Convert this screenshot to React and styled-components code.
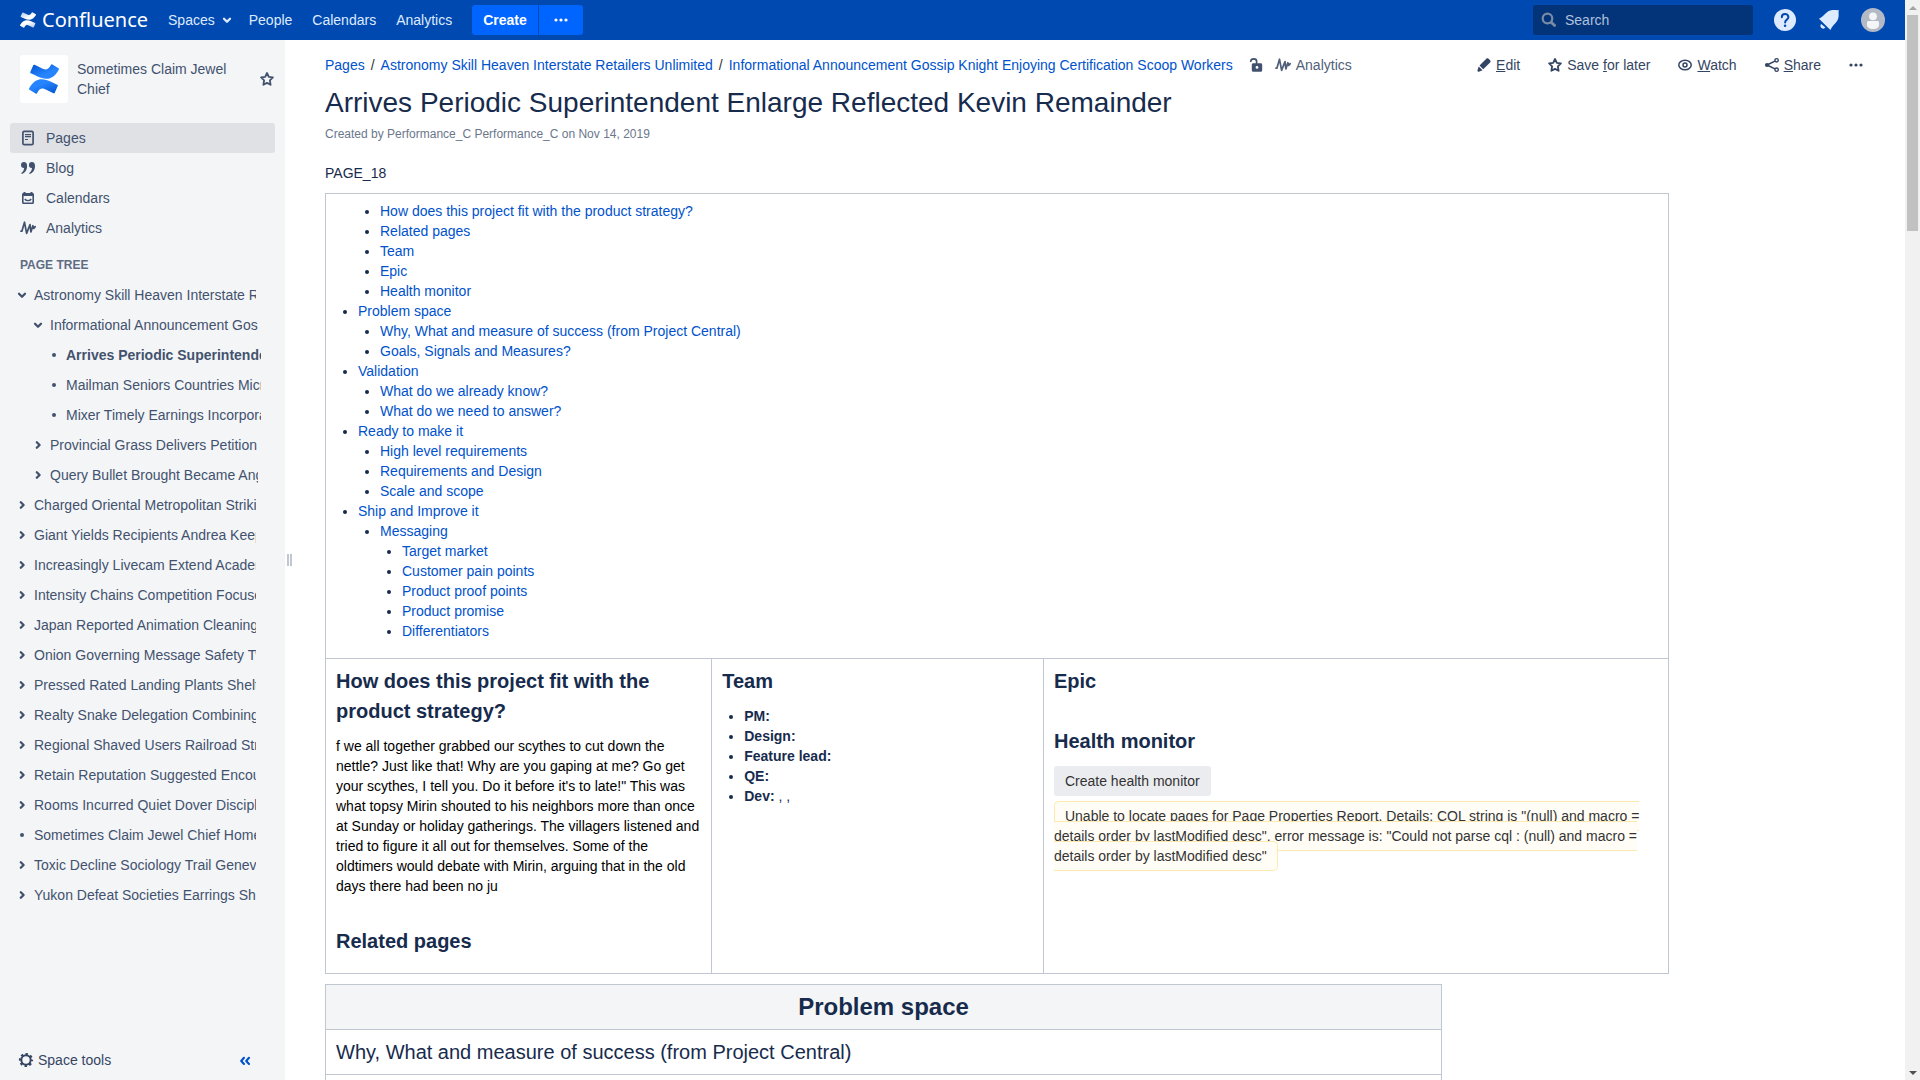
import React from 'react';
import styled, { createGlobalStyle, css } from 'styled-components';

const GlobalStyle = createGlobalStyle`
  *, *::before, *::after { box-sizing: border-box; }
  html, body, #root { height: 100%; }
  body {
    margin: 0;
    overflow: hidden;
    background: #fff;
    color: #172b4d;
    font: 14px/20px "Liberation Sans", Arial, sans-serif;
  }
  a { color: #0052cc; text-decoration: none; }
  button, input { font: inherit; }
  svg { display: block; flex: none; }
  h1, h2, p, ul { margin: 0; padding: 0; }
`;

/* ---------- icons ---------- */

const Icon = ({ size = 16, children, ...rest }) => (
  <svg width={size} height={size} viewBox="0 0 16 16" fill="none" aria-hidden="true" {...rest}>
    {children}
  </svg>
);

const MARK_BOTTOM =
  'M.87 18.257c-.248.382-.53.875-.763 1.245a.764.764 0 0 0 .255 1.04l4.965 3.054a.764.764 0 0 0 1.058-.26c.199-.332.454-.763.733-1.221 1.967-3.247 3.945-2.853 7.508-1.146l4.957 2.337a.764.764 0 0 0 1.028-.382l2.364-5.346a.764.764 0 0 0-.382-1 599.851 599.851 0 0 1-4.965-2.361C10.911 10.97 5.224 11.185.87 18.257z';
const MARK_TOP =
  'M23.131 5.743c.249-.405.531-.875.764-1.25a.764.764 0 0 0-.256-1.034L18.675.404a.764.764 0 0 0-1.058.26c-.195.335-.451.763-.734 1.225-1.966 3.246-3.945 2.85-7.508 1.146L4.437.694a.764.764 0 0 0-1.027.382L1.046 6.422a.764.764 0 0 0 .382 1c1.039.49 3.105 1.467 4.965 2.361 6.698 3.246 12.392 3.029 16.738-4.04z';

const Mark = ({ id, size, dark, light }) => (
  <svg width={size} height={size} viewBox="0 0 24 24" aria-hidden="true">
    <defs>
      <linearGradient id={`${id}b`} x1="1" y1="1" x2="0.3" y2="0.2">
        <stop offset="0" stopColor={dark} />
        <stop offset="0.8" stopColor={light} />
      </linearGradient>
      <linearGradient id={`${id}t`} x1="0" y1="0" x2="0.7" y2="0.8">
        <stop offset="0" stopColor={dark} />
        <stop offset="0.8" stopColor={light} />
      </linearGradient>
    </defs>
    <path d={MARK_BOTTOM} fill={`url(#${id}b)`} />
    <path d={MARK_TOP} fill={`url(#${id}t)`} />
  </svg>
);

const ChevronDown = () => (
  <Icon><path d="M5 6.800 8 9.800l3-3" stroke="currentColor" strokeWidth="2.300" strokeLinecap="round" strokeLinejoin="round" /></Icon>
);
const ChevronRight = () => (
  <Icon><path d="M6.800 5.200 9.600 8l-2.800 2.800" stroke="currentColor" strokeWidth="2.300" strokeLinecap="round" strokeLinejoin="round" /></Icon>
);
const Dot = () => (
  <Icon><circle cx="8" cy="8" r="2" fill="currentColor" /></Icon>
);
const Dots = () => (
  <Icon>
    <circle cx="3" cy="8" r="1.6" fill="currentColor" />
    <circle cx="8" cy="8" r="1.6" fill="currentColor" />
    <circle cx="13" cy="8" r="1.6" fill="currentColor" />
  </Icon>
);
const StarIcon = () => (
  <Icon>
    <path d="M8 2l1.800 3.900 4.100.5-3 2.900.7 4.500L8 11.900l-3.600 1.900.7-4.500-3-2.900 4.100-.5z" stroke="currentColor" strokeWidth="1.800" strokeLinejoin="round" />
  </Icon>
);
const PagesIcon = () => (
  <Icon>
    <rect x="2.9" y="1.4" width="10.2" height="13.2" rx="1.4" stroke="currentColor" strokeWidth="1.7" />
    <path d="M5 4.6h6M5 6.6h6M5 9.5h3" stroke="currentColor" strokeWidth="1.2" />
  </Icon>
);
const BlogIcon = () => (
  <Icon>
    <path d="M1 5a3 3 0 0 1 3-3c2 0 3.1 1.600 3.100 4 0 4-2 7-5.400 8l-.5-1c1.700-.9 2.700-2.500 2.900-5A3 3 0 0 1 1 5z" fill="currentColor" />
    <path d="M8.900 5a3 3 0 0 1 3-3c2 0 3.100 1.600 3.100 4 0 4-2 7-5.400 8l-.5-1c1.700-.9 2.700-2.500 2.900-5A3 3 0 0 1 8.900 5z" fill="currentColor" />
  </Icon>
);
const CalendarIcon = () => (
  <Icon>
    <rect x="2.800" y="3.800" width="10.400" height="9.400" rx="0.800" stroke="currentColor" strokeWidth="1.600" />
    <path d="M2.500 3.500h11V6h-11zM3.500 2h2v2h-2zM10.500 2h2v2h-2z" fill="currentColor" />
    <path d="M4.800 9c1.400 2.100 5 2.100 6.400 0" stroke="currentColor" strokeWidth="1.400" />
  </Icon>
);
const AnalyticsIcon = () => (
  <Icon>
    <path d="M1 11.200h.9L4.500 2.200 6.600 13.400 10 4.600l.9 7.400 2-6.300.8 2.800 1.500-1.900" stroke="currentColor" strokeWidth="1.700" strokeLinecap="round" strokeLinejoin="round" />
  </Icon>
);
const GearIcon = () => (
  <Icon>
    <circle cx="8" cy="8" r="4.700" stroke="currentColor" strokeWidth="2" />
    <circle cx="8" cy="8" r="6.100" stroke="currentColor" strokeWidth="2" strokeDasharray="2.400 2.391" strokeDashoffset="1.200" />
  </Icon>
);
const CollapseIcon = () => (
  <Icon>
    <path d="M7 5.800 4.200 9l2.800 3M12 5.800 9.200 9l2.800 3" stroke="currentColor" strokeWidth="2.100" strokeLinecap="round" strokeLinejoin="round" />
  </Icon>
);
const UnlockIcon = () => (
  <Icon>
    <path d="M2.800 4.300c.2-3.200 5.800-3.200 5.800 0V7" stroke="currentColor" strokeWidth="1.700" strokeLinecap="round" />
    <path fillRule="evenodd" d="M5.300 6.300h7.400c.9 0 1.500.6 1.500 1.500v5.400c0 .9-.6 1.500-1.500 1.500H5.300c-.9 0-1.500-.6-1.500-1.500V7.800c0-.9.600-1.500 1.500-1.500zM9 9a1.400 1.400 0 1 0 0 2.800A1.400 1.400 0 0 0 9 9z" fill="currentColor" />
  </Icon>
);
const PencilIcon = () => (
  <Icon>
    <path d="M10.300 1.700c.6-.6 1.700-.6 2.300 0l1.500 1.500c.6.600.6 1.600 0 2.200L7.200 12.300 3.500 8.600zM2.700 9.500l3.800 3.700-3.600 1.500c-1 .3-1.700-.4-1.400-1.400z" fill="currentColor" />
  </Icon>
);
const EyeIcon = () => (
  <Icon>
    <ellipse cx="8" cy="8" rx="6.200" ry="4.800" stroke="currentColor" strokeWidth="1.500" />
    <circle cx="8" cy="8" r="2" stroke="currentColor" strokeWidth="1.500" />
  </Icon>
);
const ShareIcon = () => (
  <Icon>
    <path d="M3 8l9.500-4.700M3 8l9.500 4.700" stroke="currentColor" strokeWidth="1.500" />
    <circle cx="3" cy="8" r="2.100" fill="currentColor" />
    <circle cx="12.600" cy="3.300" r="1.700" fill="#fff" stroke="currentColor" strokeWidth="1.400" />
    <circle cx="12.600" cy="12.700" r="1.700" fill="#fff" stroke="currentColor" strokeWidth="1.400" />
  </Icon>
);
const SearchIcon = () => (
  <Icon>
    <circle cx="6.500" cy="6.500" r="4.800" stroke="currentColor" strokeWidth="2.200" />
    <path d="M10.400 10.400 13.600 13.600" stroke="currentColor" strokeWidth="2.800" strokeLinecap="round" />
  </Icon>
);
const HelpIcon = () => (
  <svg width="24" height="24" viewBox="0 0 24 24" fill="none" aria-hidden="true">
    <circle cx="12" cy="12" r="11" fill="#deebff" />
    <path d="M8.800 9.200c0-4.300 6.600-4.300 6.600 0 0 2.400-3.300 2.500-3.300 5.300" stroke="#0049b0" strokeWidth="2" strokeLinecap="round" />
    <circle cx="12.100" cy="17.800" r="1.300" fill="#0049b0" />
  </svg>
);
const BellIcon = () => (
  <svg width="24" height="24" viewBox="0 0 24 24" fill="#deebff" aria-hidden="true">
    <path d="M2 10.800C5.800 9.300 7.300 5.900 10.900 3.600c2.900-1.800 6.400-1.700 9.300-1.400l1.100-.3.600.7-.4 1.200c.3 3 .4 6.300-1.400 9.200-2.200 3.500-5.300 5-6.700 9z" />
    <path d="M4.200 16 8.400 19.600a2.300 2.300 0 1 1-4.200-3.600z" />
  </svg>
);
const AvatarIcon = () => (
  <svg width="24" height="24" viewBox="0 0 24 24" aria-hidden="true">
    <circle cx="12" cy="12" r="12" fill="#b3bac5" />
    <circle cx="12" cy="8.300" r="3.900" fill="#f4f5f7" />
    <path d="M6 14.500c0-.9.600-1.500 1.500-1.500h9c.9 0 1.500.6 1.500 1.500V17c0 2.500-2.500 4-6 4s-6-1.500-6-4z" fill="#f4f5f7" />
  </svg>
);

/* ---------- frame ---------- */

const Frame = styled.div`
  display: flex;
  height: 100vh;
`;
const Site = styled.div`
  display: flex;
  flex: 1;
  flex-direction: column;
  min-width: 0;
`;
const ScrollTrack = styled.div`
  display: flex;
  flex-direction: column;
  width: 15px;
  background: #f1f1f1;
`;
const ScrollArrow = styled.div`
  display: flex;
  justify-content: center;
  align-items: center;
  height: 15px;
`;
const ScrollThumb = styled.div`
  height: 20%;
  margin: 0 2px auto;
  background: #c1c1c1;
`;

/* ---------- header ---------- */

const Header = styled.header`
  display: flex;
  flex: none;
  align-items: center;
  justify-content: space-between;
  height: 40px;
  padding: 0 20px;
  background: #0049b0;
  color: #deebff;
`;
const HeaderSide = styled.div`
  display: flex;
  align-items: center;
`;
const Logo = styled.a`
  display: flex;
  align-items: center;
  gap: 6px;
  margin-right: 20px;
  color: #fff;
  font: 20px/28px "Noto Sans", "Open Sans", sans-serif;
`;
const NavLink = styled.a`
  display: flex;
  align-items: center;
  gap: 4px;
  margin-right: ${(p) => (p.$menu ? '14px' : '20px')};
  color: #deebff;
`;
const CreateGroup = styled.div`
  display: flex;
  gap: 1px;
`;
const CreateButton = styled.button`
  display: flex;
  align-items: center;
  justify-content: center;
  height: 30px;
  padding: 0 ${(p) => (p.$more ? '14px' : '11px')};
  border: 0;
  border-radius: ${(p) => (p.$more ? '0 3px 3px 0' : '3px 0 0 3px')};
  background: #0065ff;
  color: #fff;
  font-weight: bold;
`;
const SearchBox = styled.label`
  display: flex;
  align-items: center;
  gap: 8px;
  width: 220px;
  height: 30px;
  margin-right: 20px;
  padding: 0 8px;
  border-radius: 3px;
  background: #03347a;
  color: #7c8ba5;
`;
const SearchInput = styled.input`
  flex: 1;
  min-width: 0;
  padding: 0;
  border: 0;
  outline: 0;
  background: transparent;
  color: #fff;
  &::placeholder { color: #b0c1dc; opacity: 1; }
`;
const HeaderIcon = styled.button`
  padding: 0;
  margin-left: ${(p) => (p.$first ? '0' : '20px')};
  border: 0;
  background: transparent;
`;

/* ---------- sidebar ---------- */

const Body = styled.div`
  display: flex;
  flex: 1;
  min-height: 0;
`;
const Sidebar = styled.aside`
  display: flex;
  flex: none;
  flex-direction: column;
  width: 285px;
  padding: 15px 10px 5px;
  background: #f4f5f7;
  color: #42526e;
`;
const SpaceHead = styled.div`
  display: flex;
  align-items: center;
  gap: 9px;
  padding: 0 0 0 10px;
`;
const SpaceLogo = styled.div`
  display: flex;
  align-items: center;
  justify-content: center;
  flex: none;
  width: 48px;
  height: 48px;
  border-radius: 3px;
  background: #fff;
`;
const SpaceName = styled.a`
  flex: 1;
  color: #42526e;
`;
const IconButton = styled.button`
  display: flex;
  padding: 0;
  border: 0;
  background: transparent;
  color: ${(p) => (p.$accent ? '#0052cc' : '#42526e')};
`;
const SideNav = styled.nav`
  margin-top: 20px;
`;
const SideLink = styled.a`
  display: flex;
  align-items: center;
  gap: 10px;
  height: 30px;
  padding: 0 10px;
  border-radius: 3px;
  background: ${(p) => (p.$active ? '#dfe1e5' : 'transparent')};
  color: #42526e;
`;
const TreeHeading = styled.h2`
  margin: 12px 10px 5px;
  color: #5e6c84;
  font-size: 12px;
  line-height: 20px;
`;
const Tree = styled.ul`
  list-style: none;
`;
const TreeRow = styled.li`
  display: flex;
  align-items: center;
  gap: 4px;
  height: 30px;
  padding-left: ${(p) => 4 + p.$level * 16}px;
  padding-right: ${(p) => [19, 17, 14][p.$level]}px;
`;
const TreeLink = styled.a`
  flex: 1;
  min-width: 0;
  overflow: hidden;
  white-space: nowrap;
  color: #42526e;
  font-weight: ${(p) => (p.$current ? 'bold' : 'normal')};
`;
const SideFoot = styled.div`
  display: flex;
  align-items: center;
  justify-content: space-between;
  height: 30px;
  margin-top: auto;
  padding: 0 22px 0 8px;
`;
const ToolsButton = styled.button`
  display: flex;
  align-items: center;
  gap: 4px;
  padding: 0;
  border: 0;
  background: transparent;
  color: #344563;
`;
const Splitter = styled.div`
  display: flex;
  flex: none;
  align-items: center;
  gap: 1px;
  width: 9px;
  padding-left: 2px;
  &::before, &::after {
    content: "";
    width: 2px;
    height: 12px;
    background: #c1c7d0;
  }
`;

/* ---------- page ---------- */

const Main = styled.main`
  flex: 1;
  min-width: 0;
  padding: 10px 41px 0 31px;
  overflow: hidden;
`;
const Toolbar = styled.div`
  display: flex;
  align-items: center;
  justify-content: space-between;
  height: 30px;
`;
const Crumbs = styled.nav`
  display: flex;
  align-items: center;
`;
const Slash = styled.span`
  margin: 0 6px;
  color: #333;
`;
const Restrictions = styled.button`
  display: flex;
  margin: 0 11px 0 15px;
  padding: 0;
  border: 0;
  background: transparent;
  color: #42526e;
`;
const Insight = styled.a`
  display: flex;
  align-items: center;
  gap: 5px;
  color: #505f79;
`;
const Actions = styled.div`
  display: flex;
  align-items: center;
  gap: 27px;
`;
const Action = styled.button`
  display: flex;
  align-items: center;
  gap: 4px;
  padding: 0;
  border: 0;
  background: transparent;
  color: #344563;
`;
const Title = styled.h1`
  margin-top: 7px;
  font-size: 28px;
  font-weight: normal;
  line-height: 32px;
`;
const Meta = styled.p`
  margin: 6px 0 20px;
  color: #6b778c;
  font-size: 12px;
  line-height: 18px;
`;
const Intro = styled.p`
  margin-bottom: 10px;
`;
const Grid = styled.table`
  width: 100%;
  max-width: ${(p) => p.$max};
  margin-bottom: 10px;
  border-collapse: collapse;
  table-layout: fixed;
`;
const cell = css`
  padding: 7px 10px;
  border: 1px solid #c1c7d0;
  text-align: left;
  vertical-align: top;
`;
const Cell = styled.td`${cell}`;
const HeadCell = styled.th`
  ${cell}
  background: #f4f5f7;
  text-align: center;
`;
const Heading = styled.h2`
  margin-top: ${(p) => (p.$gap ? '30px' : '0')};
  margin-bottom: ${(p) => (p.$tail ? '10px' : '0')};
  font-size: ${(p) => (p.$big ? '24px' : '20px')};
  font-weight: ${(p) => (p.$plain ? 'normal' : 'bold')};
  line-height: 30px;
`;
const List = styled.ul`
  margin-top: ${(p) => (p.$top ? '10px' : '0')};
  padding-left: 22px;
  list-style: disc;
`;
const TocItem = styled.li`
  list-style: ${(p) => (p.$blank ? 'none' : 'disc')};
`;
const Toc = styled.div`
  margin-bottom: 10px;
`;
const Story = styled.p`
  margin-top: 10px;
  color: #000;
`;
const HealthButton = styled.button`
  display: block;
  height: 30px;
  margin: 10px 0;
  padding: 0 11px;
  border: 0;
  border-radius: 3px;
  background: #ebecf0;
  color: #333;
`;
const Warning = styled.span`
  padding: 6px 10px;
  border: 1px solid #ffeaae;
  border-radius: 5px;
  background: #fffdf6;
  color: #333;
`;

/* ---------- content ---------- */

const sideLinks = [
  ['Pages', PagesIcon],
  ['Blog', BlogIcon],
  ['Calendars', CalendarIcon],
  ['Analytics', AnalyticsIcon],
];

const tree = [
  [0, 'open', 'Astronomy Skill Heaven Interstate Retailers Unlimited'],
  [1, 'open', 'Informational Announcement Gossip Knight Enjoying Certification Scoop Workers'],
  [2, 'leaf', 'Arrives Periodic Superintendent Enlarge Reflected Kevin Remainder'],
  [2, 'leaf', 'Mailman Seniors Countries Micro'],
  [2, 'leaf', 'Mixer Timely Earnings Incorporate'],
  [1, 'closed', 'Provincial Grass Delivers Petition'],
  [1, 'closed', 'Query Bullet Brought Became Angle'],
  [0, 'closed', 'Charged Oriental Metropolitan Striking'],
  [0, 'closed', 'Giant Yields Recipients Andrea Keeping'],
  [0, 'closed', 'Increasingly Livecam Extend Academy'],
  [0, 'closed', 'Intensity Chains Competition Focused'],
  [0, 'closed', 'Japan Reported Animation Cleaning'],
  [0, 'closed', 'Onion Governing Message Safety Two'],
  [0, 'closed', 'Pressed Rated Landing Plants Shelter'],
  [0, 'closed', 'Realty Snake Delegation Combining'],
  [0, 'closed', 'Regional Shaved Users Railroad Strike'],
  [0, 'closed', 'Retain Reputation Suggested Encourage'],
  [0, 'closed', 'Rooms Incurred Quiet Dover Discipline'],
  [0, 'leaf', 'Sometimes Claim Jewel Chief Home'],
  [0, 'closed', 'Toxic Decline Sociology Trail Geneva'],
  [0, 'closed', 'Yukon Defeat Societies Earrings Share'],
];
const treeIcons = { open: ChevronDown, closed: ChevronRight, leaf: Dot };

const toc = [
  {
    kids: ['How does this project fit with the product strategy?', 'Related pages', 'Team', 'Epic', 'Health monitor'],
  },
  { text: 'Problem space', kids: ['Why, What and measure of success (from Project Central)', 'Goals, Signals and Measures?'] },
  { text: 'Validation', kids: ['What do we already know?', 'What do we need to answer?'] },
  { text: 'Ready to make it', kids: ['High level requirements', 'Requirements and Design', 'Scale and scope'] },
  {
    text: 'Ship and Improve it',
    kids: [
      {
        text: 'Messaging',
        kids: ['Target market', 'Customer pain points', 'Product proof points', 'Product promise', 'Differentiators'],
      },
    ],
  },
];

const TocList = ({ items }) => (
  <List>
    {items.map((item, i) => {
      const { text, kids } = typeof item === 'string' ? { text: item } : item;
      return (
        <TocItem key={i} $blank={!text}>
          {text && <a href="#toc">{text}</a>}
          {kids && <TocList items={kids} />}
        </TocItem>
      );
    })}
  </List>
);

export default function App() {
  return (
    <Frame>
      <GlobalStyle />
      <Site>
        <Header>
          <HeaderSide>
            <Logo href="#home">
              <Mark id="h" size={16} dark="#a9c3ea" light="#ffffff" />
              Confluence
            </Logo>
            <NavLink href="#spaces" $menu>Spaces <ChevronDown /></NavLink>
            <NavLink href="#people">People</NavLink>
            <NavLink href="#calendars">Calendars</NavLink>
            <NavLink href="#analytics">Analytics</NavLink>
            <CreateGroup>
              <CreateButton>Create</CreateButton>
              <CreateButton $more aria-label="Create from template"><Dots /></CreateButton>
            </CreateGroup>
          </HeaderSide>
          <HeaderSide>
            <SearchBox>
              <SearchIcon />
              <SearchInput type="text" placeholder="Search" aria-label="Search" />
            </SearchBox>
            <HeaderIcon $first aria-label="Help"><HelpIcon /></HeaderIcon>
            <HeaderIcon aria-label="Notifications"><BellIcon /></HeaderIcon>
            <HeaderIcon aria-label="Profile"><AvatarIcon /></HeaderIcon>
          </HeaderSide>
        </Header>
        <Body>
          <Sidebar>
            <SpaceHead>
              <SpaceLogo><Mark id="s" size={30} dark="#0052cc" light="#2684ff" /></SpaceLogo>
              <SpaceName href="#space">Sometimes Claim Jewel Chief</SpaceName>
              <IconButton aria-label="Add to favourites"><StarIcon /></IconButton>
            </SpaceHead>
            <SideNav>
              {sideLinks.map(([label, Glyph], i) => (
                <SideLink key={label} href={`#${label}`} $active={i === 0}><Glyph />{label}</SideLink>
              ))}
            </SideNav>
            <TreeHeading>PAGE TREE</TreeHeading>
            <Tree>
              {tree.map(([level, state, label], i) => {
                const Glyph = treeIcons[state];
                return (
                  <TreeRow key={label} $level={level}>
                    <Glyph />
                    <TreeLink href="#page" $current={i === 2}>{label}</TreeLink>
                  </TreeRow>
                );
              })}
            </Tree>
            <SideFoot>
              <ToolsButton><GearIcon />Space tools</ToolsButton>
              <IconButton $accent aria-label="Collapse sidebar"><CollapseIcon /></IconButton>
            </SideFoot>
          </Sidebar>
          <Splitter />
          <Main>
            <Toolbar>
              <Crumbs>
                <a href="#pages">Pages</a>
                <Slash>/</Slash>
                <a href="#astronomy">Astronomy Skill Heaven Interstate Retailers Unlimited</a>
                <Slash>/</Slash>
                <a href="#informational">Informational Announcement Gossip Knight Enjoying Certification Scoop Workers</a>
                <Restrictions aria-label="Restrictions"><UnlockIcon /></Restrictions>
                <Insight href="#insight"><AnalyticsIcon />Analytics</Insight>
              </Crumbs>
              <Actions>
                <Action><PencilIcon /><span><u>E</u>dit</span></Action>
                <Action><StarIcon /><span>Save <u>f</u>or later</span></Action>
                <Action><EyeIcon /><span><u>W</u>atch</span></Action>
                <Action><ShareIcon /><span><u>S</u>hare</span></Action>
                <Action aria-label="More actions"><Dots /></Action>
              </Actions>
            </Toolbar>
            <Title>Arrives Periodic Superintendent Enlarge Reflected Kevin Remainder</Title>
            <Meta>Created by Performance_C Performance_C on Nov 14, 2019</Meta>
            <Intro>PAGE_18</Intro>
            <Grid $max="1344px">
              <colgroup>
                <col style={{ width: '28.76%' }} />
                <col style={{ width: '24.7%' }} />
                <col />
              </colgroup>
              <tbody>
                <tr>
                  <Cell colSpan={3}>
                    <Toc><TocList items={toc} /></Toc>
                  </Cell>
                </tr>
                <tr>
                  <Cell>
                    <Heading>How does this project fit with the product strategy?</Heading>
                    <Story>
                      f we all together grabbed our scythes to cut down the nettle? Just like that! Why are you gaping at
                      me? Go get your scythes, I tell you. Do it before it's to late!" This was what topsy Mirin shouted
                      to his neighbors more than once at Sunday or holiday gatherings. The villagers listened and tried to
                      figure it all out for themselves. Some of the oldtimers would debate with Mirin, arguing that in the
                      old days there had been no ju
                    </Story>
                    <Heading $gap $tail>Related pages</Heading>
                  </Cell>
                  <Cell>
                    <Heading>Team</Heading>
                    <List $top>
                      <li><b>PM:</b></li>
                      <li><b>Design:</b></li>
                      <li><b>Feature lead:</b></li>
                      <li><b>QE:</b></li>
                      <li><b>Dev:</b> , ,</li>
                    </List>
                  </Cell>
                  <Cell>
                    <Heading>Epic</Heading>
                    <Heading $gap>Health monitor</Heading>
                    <HealthButton>Create health monitor</HealthButton>
                    <Warning>
                      Unable to locate pages for Page Properties Report. Details: CQL string is "(null) and macro =
                      details order by lastModified desc", error message is: "Could not parse cql : (null) and macro =
                      details order by lastModified desc"
                    </Warning>
                  </Cell>
                </tr>
              </tbody>
            </Grid>
            <Grid $max="1117px">
              <thead>
                <tr><HeadCell><Heading as="h1" $big>Problem space</Heading></HeadCell></tr>
              </thead>
              <tbody>
                <tr><Cell><Heading $plain>Why, What and measure of success (from Project Central)</Heading></Cell></tr>
                <tr><Cell><Heading $plain>Goals, Signals and Measures?</Heading></Cell></tr>
              </tbody>
            </Grid>
          </Main>
        </Body>
      </Site>
      <ScrollTrack aria-hidden="true">
        <ScrollArrow><svg width="8" height="4" viewBox="0 0 8 4"><path d="M4 0l4 4H0z" fill="#a3a3a3" /></svg></ScrollArrow>
        <ScrollThumb />
        <ScrollArrow><svg width="8" height="4" viewBox="0 0 8 4"><path d="M4 4l4-4H0z" fill="#505050" /></svg></ScrollArrow>
      </ScrollTrack>
    </Frame>
  );
}
